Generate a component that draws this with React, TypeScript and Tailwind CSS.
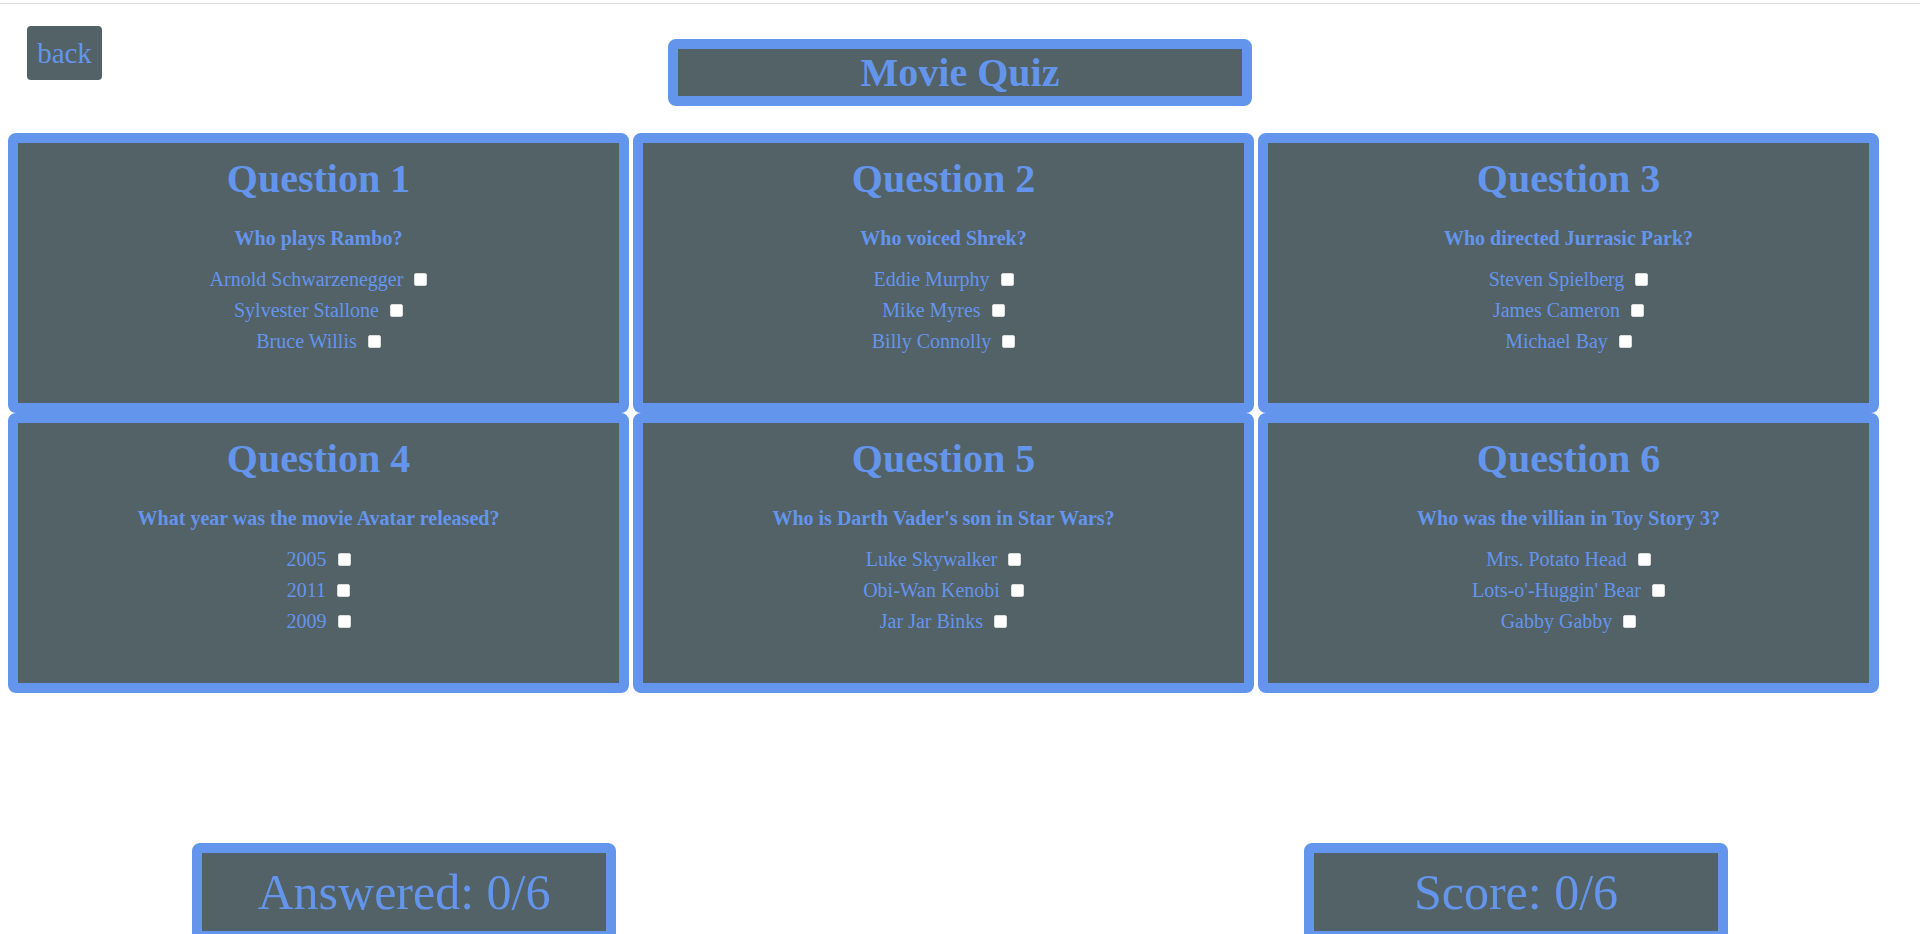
import { useState } from "react";

type Question = {
  prompt: string;
  options: string[];
  answer: number;
};

const QUESTIONS: Question[] = [
  {
    prompt: "Who plays Rambo?",
    options: ["Arnold Schwarzenegger", "Sylvester Stallone", "Bruce Willis"],
    answer: 1,
  },
  {
    prompt: "Who voiced Shrek?",
    options: ["Eddie Murphy", "Mike Myres", "Billy Connolly"],
    answer: 1,
  },
  {
    prompt: "Who directed Jurrasic Park?",
    options: ["Steven Spielberg", "James Cameron", "Michael Bay"],
    answer: 0,
  },
  {
    prompt: "What year was the movie Avatar released?",
    options: ["2005", "2011", "2009"],
    answer: 2,
  },
  {
    prompt: "Who is Darth Vader's son in Star Wars?",
    options: ["Luke Skywalker", "Obi-Wan Kenobi", "Jar Jar Binks"],
    answer: 0,
  },
  {
    prompt: "Who was the villian in Toy Story 3?",
    options: ["Mrs. Potato Head", "Lots-o'-Huggin' Bear", "Gabby Gabby"],
    answer: 1,
  },
];

function QuestionCard({
  index,
  q,
  picked,
  onPick,
}: {
  index: number;
  q: Question;
  picked: number | undefined;
  onPick: (i: number) => void;
}) {
  return (
    <div className="h-[280px] rounded-[8px] border-[10px] border-[#6495ed] bg-[#536266] text-center">
      <h2 className="mt-[14px] text-[40px] font-bold leading-[44px]">Question {index + 1}</h2>
      <p className="mt-[26px] text-[20px] font-bold leading-[22px]">{q.prompt}</p>
      <div className="mt-[15px] flex flex-col">
        {q.options.map((opt, i) => (
          <label key={opt} className="flex h-[31px] items-center justify-center">
            <span className="text-[20px] leading-[31px]">{opt}</span>
            <input
              type="checkbox"
              checked={picked === i}
              onChange={() => onPick(i)}
              className="ml-[11px] h-[13px] w-[13px] appearance-none rounded-[2px] border border-[#dcdcdc] bg-white checked:bg-[#2f6fc9]"
            />
          </label>
        ))}
      </div>
    </div>
  );
}

export default function App() {
  const [picks, setPicks] = useState<Record<number, number>>({});

  const answered = Object.keys(picks).length;
  const score = QUESTIONS.filter((q, i) => picks[i] === q.answer).length;

  return (
    <div className="h-screen overflow-hidden bg-white font-['Liberation_Serif',serif] text-[#6495ed]">
      <div className="pt-[3px]">
        <div className="h-px bg-[#e0e0e0]" />
      </div>

      {/* header */}
      <div className="grid grid-cols-[1fr_auto_1fr] items-start">
        <div>
          <button
            onClick={() => setPicks({})}
            className="ml-[27px] mt-[22px] h-[54px] w-[75px] rounded-[4px] bg-[#536266] text-[29px] leading-[54px]"
          >
            back
          </button>
        </div>
        <div className="mt-[35px] w-[584px] rounded-[8px] border-[10px] border-[#6495ed] bg-[#536266]">
          <h1 className="text-center text-[40px] font-bold leading-[47px]">Movie Quiz</h1>
        </div>
        <div />
      </div>

      {/* questions */}
      <div className="mt-[27px] grid grid-cols-[repeat(3,621px)] gap-x-[4px] pl-[8px]">
        {QUESTIONS.map((q, i) => (
          <QuestionCard
            key={i}
            index={i}
            q={q}
            picked={picks[i]}
            onPick={(o) => setPicks((p) => ({ ...p, [i]: o }))}
          />
        ))}
      </div>

      {/* totals */}
      <div className="mt-[150px] flex justify-between px-[192px]">
        <div className="w-[424px] rounded-[8px] border-[10px] border-[#6495ed] bg-[#536266] pb-[11px] pt-[11px] text-center text-[50px] leading-[56px]">
          Answered: {answered}/{QUESTIONS.length}
        </div>
        <div className="w-[424px] rounded-[8px] border-[10px] border-[#6495ed] bg-[#536266] pb-[11px] pt-[11px] text-center text-[50px] leading-[56px]">
          Score: {score}/{QUESTIONS.length}
        </div>
      </div>
    </div>
  );
}
